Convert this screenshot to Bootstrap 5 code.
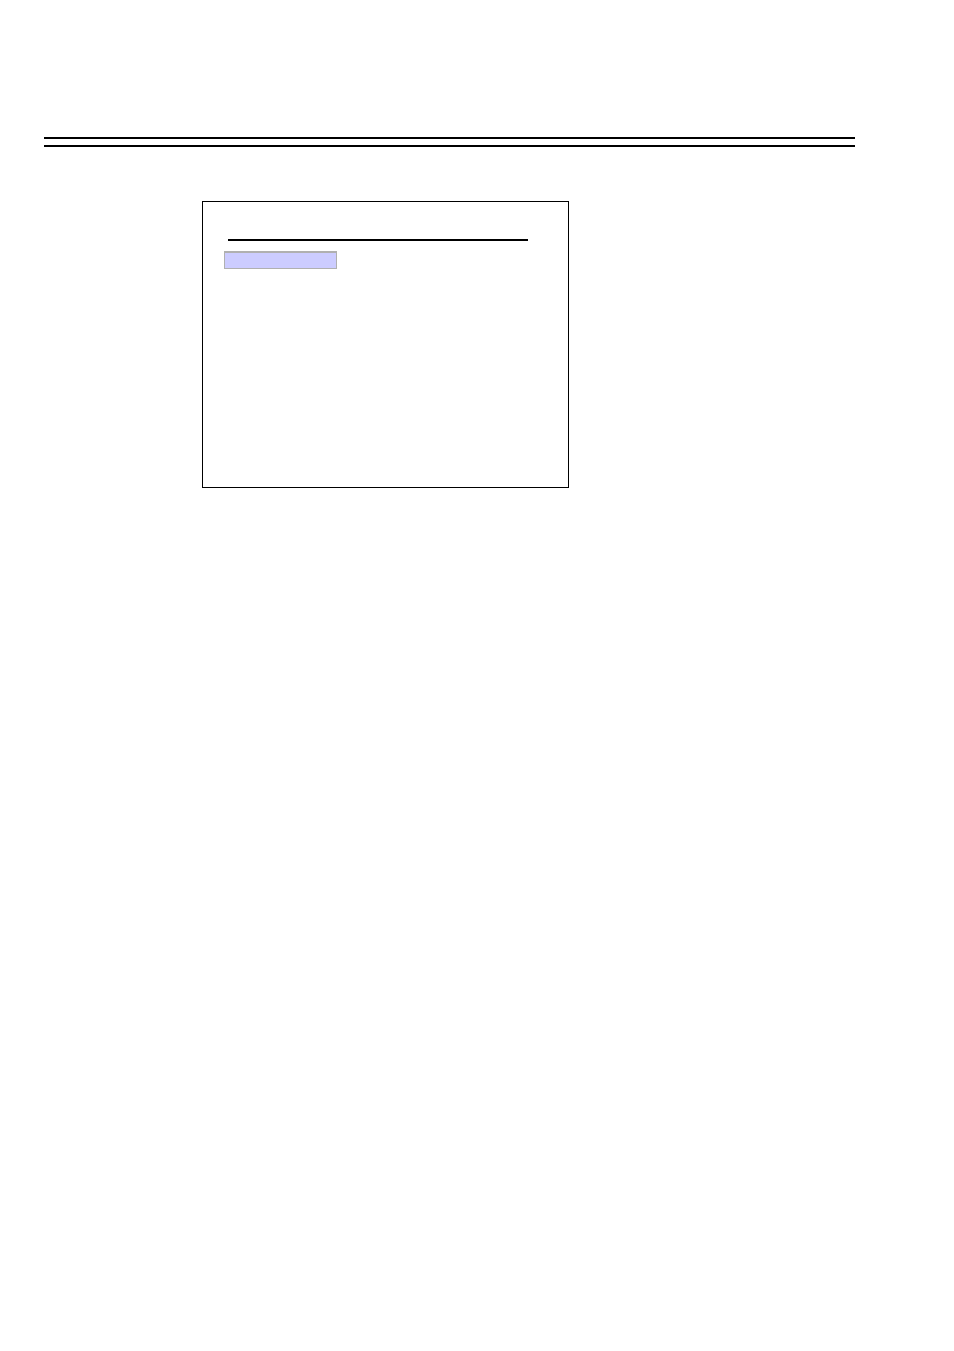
<!DOCTYPE html>
<html lang="en">
<head>
<meta charset="utf-8">
<meta name="viewport" content="width=device-width, initial-scale=1">
<title>Menu screen</title>
<link href="https://cdn.jsdelivr.net/npm/bootstrap@5.3.0/dist/css/bootstrap.min.css" rel="stylesheet">
<style>
body { background: #fff; font-family: "Liberation Sans", Arial, sans-serif; }
.sheet { padding: 137px 99px 48px 44px; }
.double-rule { height: 10px; border-top: 2px solid #000; border-bottom: 2px solid #000; }
.screen { width: 367px; max-width: 100%; min-height: 287px; margin: 54px 0 0 158px; padding: 37px 40px 24px 21px; border: 1px solid #000; }
.title-rule { height: 2px; margin-left: 4px; background: #000; }
.selection { width: 113px; height: 18px; margin-top: 10px; background: #ccf; border: 1px solid #b0b0b0; border-top-width: 2px; }
</style>
</head>
<body>
<main class="sheet container-fluid">
  <header class="double-rule"></header>
  <section class="screen">
    <div class="title-rule"></div>
    <div class="selection"></div>
  </section>
</main>
<script src="https://cdn.jsdelivr.net/npm/bootstrap@5.3.0/dist/js/bootstrap.bundle.min.js"></script>
</body>
</html>
